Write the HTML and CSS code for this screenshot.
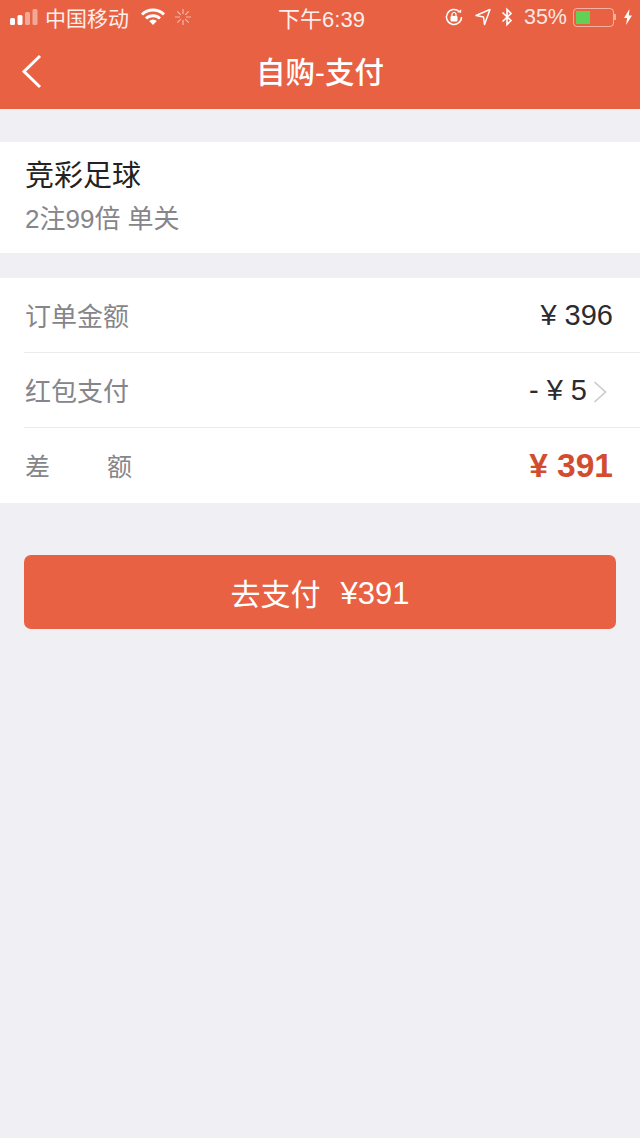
FILE: index.html
```html
<!DOCTYPE html>
<html>
	<head>
		<meta charset="utf-8">
		<title>自购-支付</title>
		<link rel="stylesheet" href="styles.css">
	</head>
	<body>
		<div id="header">
			<div id="statusBar">
				<div class="statusLeft">
					<svg class="signal" width="30" height="18" viewBox="0 0 30 18">
						<rect x="0" y="10" width="5" height="7" rx="1.5" fill="#fff"/>
						<rect x="7.5" y="7" width="5" height="10" rx="1.5" fill="#fff"/>
						<rect x="15" y="4" width="5" height="13" rx="1.5" fill="#fff" opacity=".45"/>
						<rect x="22.5" y="1" width="5" height="16" rx="1.5" fill="#fff" opacity=".45"/>
					</svg>
					<span class="carrier">中国移动</span>
					<svg class="wifi" width="26" height="18" viewBox="0 0 26 18">
						<path d="M2 6.5a15.5 15.5 0 0 1 22 0" fill="none" stroke="#fff" stroke-width="3"/>
						<path d="M6 10.5a10 10 0 0 1 14 0" fill="none" stroke="#fff" stroke-width="3"/>
						<path d="M9.2 13a5.4 5.4 0 0 1 7.6 0L13 17z" fill="#fff"/>
					</svg>
					<svg class="spinner" width="18" height="18" viewBox="0 0 18 18" stroke="#fff" stroke-width="1.2" opacity=".55">
						<path d="M9 1v5M9 12v5M1 9h5M12 9h5M3.3 3.3l3.5 3.5M11.2 11.2l3.5 3.5M14.7 3.3l-3.5 3.5M6.8 11.2l-3.5 3.5"/>
					</svg>
				</div>
				<div class="statusTime">下午6:39</div>
				<div class="statusRight">
					<svg width="20" height="20" viewBox="0 0 20 20">
						<path d="M17.5 10a7.5 7.5 0 1 1-2.2-5.3" fill="none" stroke="#fff" stroke-width="1.5"/>
						<path d="M13.5 5.2l3.6.6.2-3.6z" fill="#fff"/>
						<rect x="6.5" y="9" width="7" height="5.5" rx="1" fill="#fff"/>
						<path d="M8 9V7.5a2 2 0 0 1 4 0V9" fill="none" stroke="#fff" stroke-width="1.2"/>
					</svg>
					<svg class="arrow" width="16" height="18" viewBox="0 0 16 18">
						<path d="M1 7.5L15 1.5L9.5 16.5L8.5 9z" fill="none" stroke="#fff" stroke-width="1.5" stroke-linejoin="round"/>
					</svg>
					<svg class="bt" width="12" height="20" viewBox="0 0 12 20">
						<path d="M1.5 5.5L10 13.5L6 17.5V2.5L10 6.5L1.5 14.5" fill="none" stroke="#fff" stroke-width="1.6"/>
					</svg>
					<span class="percent">35%</span>
					<div class="battery"><div class="batteryLevel"></div></div>
					<div class="batteryTip"></div>
					<svg class="bolt" width="10" height="16" viewBox="0 0 10 16">
						<path d="M6.5 0L1 9h3.2L3 16l6-9.5H5.8z" fill="#fff"/>
					</svg>
				</div>
			</div>
			<div id="navBar">
				<svg class="back" width="24" height="36" viewBox="0 0 24 36">
					<path d="M20 3L4 18.5L20 34" fill="none" stroke="#fff" stroke-width="3"/>
				</svg>
				<div class="navTitle">自购-支付</div>
			</div>
		</div>

		<div id="lottery" class="panel">
			<div class="lotteryName">竞彩足球</div>
			<div class="lotteryInfo">2注99倍 单关</div>
		</div>

		<div id="amounts" class="panel">
			<div class="row">
				<span class="rowLabel">订单金额</span>
				<span class="rowValue">¥ 396</span>
			</div>
			<div class="row">
				<span class="rowLabel">红包支付</span>
				<span class="rowValue rowLink">- ¥ 5
					<svg class="chevron" width="15" height="22" viewBox="0 0 15 22">
						<path d="M1.5 1L12.5 11L1.5 21" fill="none" stroke="#c9c9ce" stroke-width="1.6"/>
					</svg>
				</span>
			</div>
			<div class="row">
				<span class="rowLabel rowLabelWide"><span>差</span><span>额</span></span>
				<span class="rowValue rowTotal">¥ 391</span>
			</div>
		</div>

		<div id="payBtn"><span>去支付</span><span class="payPrice">¥391</span></div>
	</body>
</html>
```
FILE: styles.css
```css
*{margin: 0;padding: 0;box-sizing: border-box;}
html,
body{width: 100%;height: 100%;overflow: hidden;}
body{background-color: #efeff4;font-family: "Liberation Sans", "Noto Sans CJK SC", sans-serif;}

#header{height: 109px;background-color: #e96143;color: #fff;}
#statusBar{height: 34px;padding: 0 7px 0 10px;display: grid;grid-template-columns: 1fr auto 1fr;align-items: center;}
.statusLeft,
.statusRight{display: flex;align-items: center;}
.statusRight{justify-content: flex-end;}
.carrier{font-size: 21px;margin-left: 5px;opacity: .9;}
.wifi{margin-left: 11px;}
.spinner{margin-left: 8px;}
.statusTime{font-size: 22px;opacity: .9;}
.arrow{margin-left: 11px;}
.bt{margin-left: 10px;}
.percent{font-size: 21.5px;margin-left: 11px;opacity: .85;}
.battery{width: 41px;height: 19px;margin-left: 6px;padding: 2px;border: 1.5px solid rgba(255,255,255,.5);border-radius: 4px;}
.batteryLevel{width: 14px;height: 100%;background-color: #62d055;}
.batteryTip{width: 2px;height: 6px;background-color: rgba(255,255,255,.5);}
.bolt{margin-left: 7px;}

#navBar{height: 75px;position: relative;display: flex;align-items: center;justify-content: center;padding-bottom: 4px;}
.back{position: absolute;left: 20px;top: 19px;}
.navTitle{font-size: 29.5px;font-weight: 500;}

.panel{background-color: #fff;}
#lottery{height: 111px;margin-top: 33px;padding: 15px 25px 0;}
.lotteryName{font-size: 29px;line-height: 38px;color: #222;}
.lotteryInfo{font-size: 26px;line-height: 34px;margin-top: 7px;color: #85858a;}

#amounts{margin-top: 25px;padding-left: 24px;padding-bottom: 1px;}
.row{height: 75px;padding-right: 27px;display: flex;align-items: center;justify-content: space-between;border-top: 1px solid #ebebee;}
.row:first-child{height: 74px;border-top: 0;}
.rowLabel{font-size: 26px;color: #85858a;margin-left: 1px;margin-bottom: 1px;}
.rowLabelWide{width: 107px;font-size: 25px;margin-bottom: 0;display: flex;justify-content: space-between;}
.rowValue{font-size: 29px;color: #2b2b30;}
.rowLink{display: flex;align-items: center;margin-right: 5px;gap: 6px;}
.chevron{display: block;margin-top: 3px;}
.rowTotal{font-size: 33.5px;font-weight: 700;color: #d24d30;padding-top: 2px;}

#payBtn{height: 74px;margin: 52px 24px 0;border-radius: 7px;background-color: #e96143;color: #fff;font-size: 30px;display: flex;align-items: center;justify-content: center;gap: 20px;}
.payPrice{font-size: 31px;margin-top: 3px;}
```
